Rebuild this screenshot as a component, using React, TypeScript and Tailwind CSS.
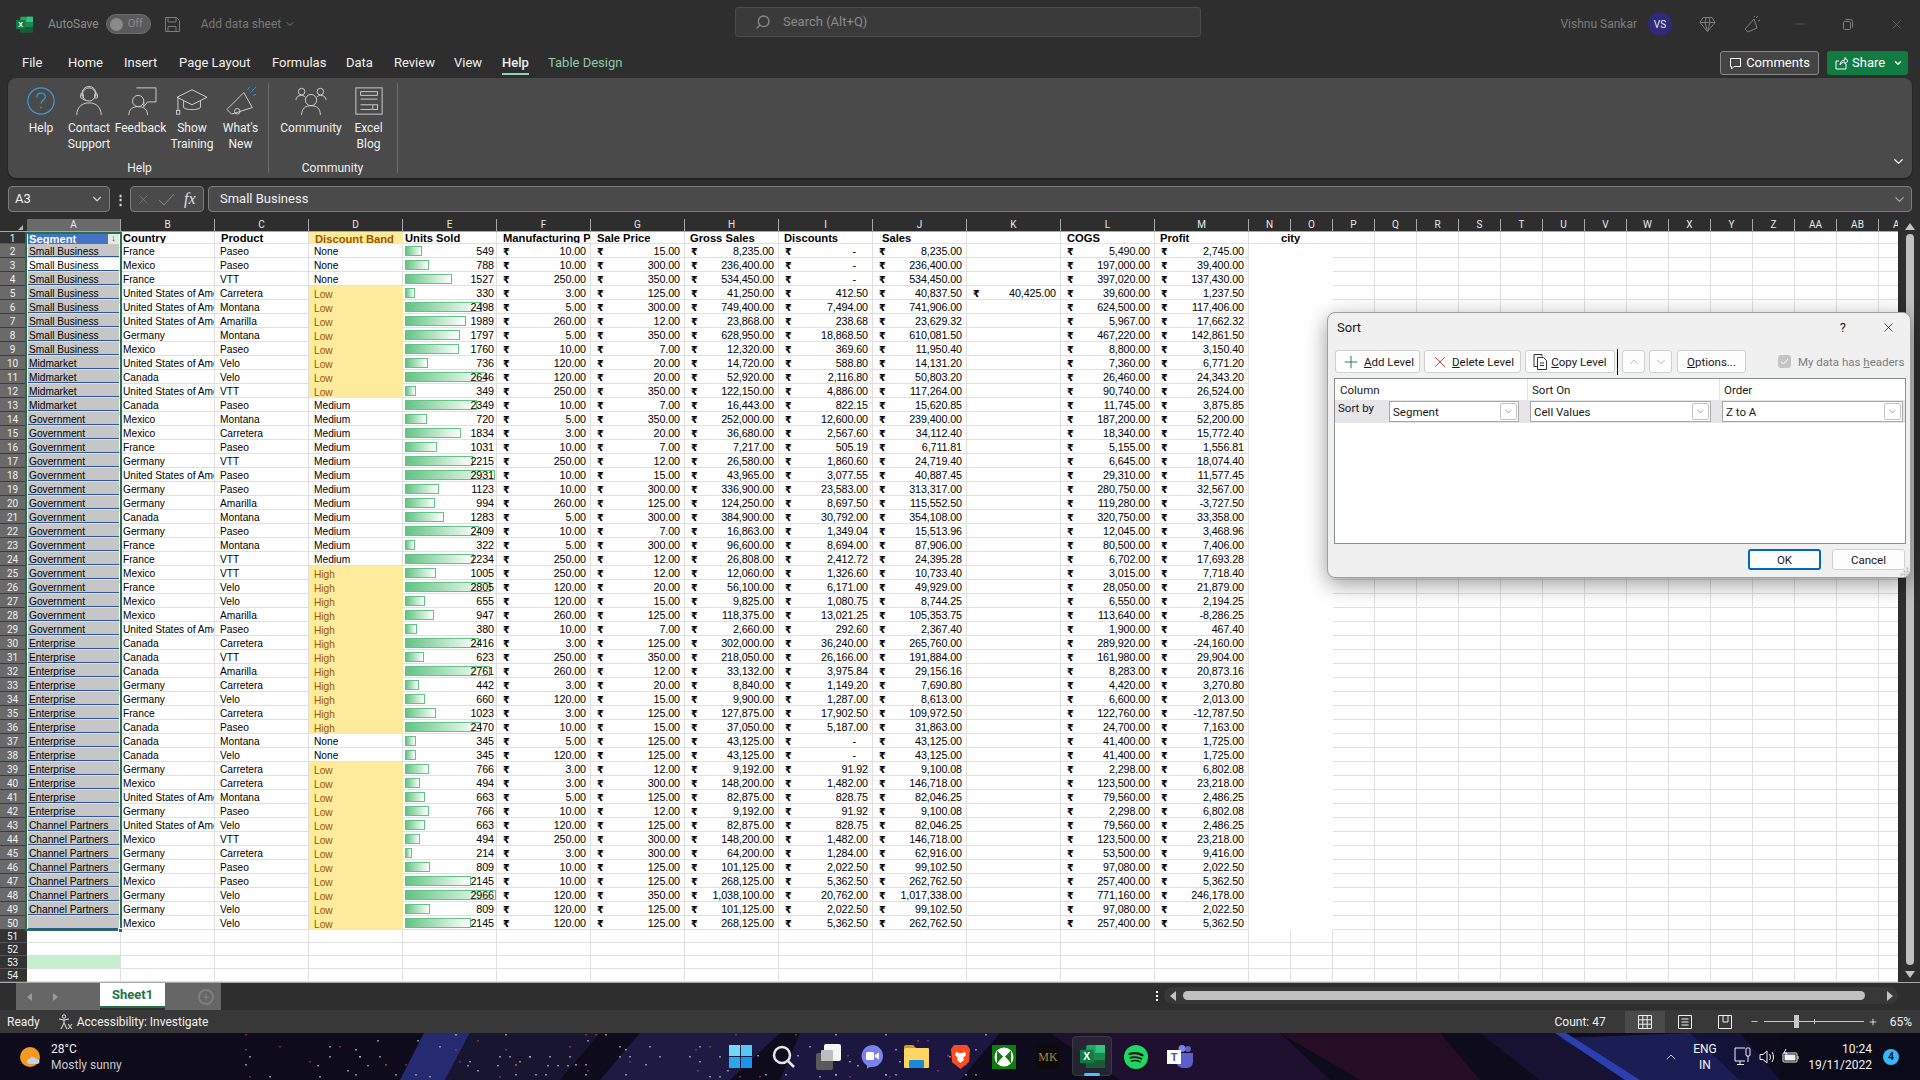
import { ChevronDown, ChevronUp, Minus, Plus, Search, X } from "lucide-react";
import type { ReactNode } from "react";

const RAW = `SB|France|Paseo|None|549|10.00|15.00|8,235.00|-|8,235.00|5,490.00|2,745.00
SB|Mexico|Paseo|None|788|10.00|300.00|236,400.00|-|236,400.00|197,000.00|39,400.00
SB|France|VTT|None|1527|250.00|350.00|534,450.00|-|534,450.00|397,020.00|137,430.00
SB|US|Carretera|Low|330|3.00|125.00|41,250.00|412.50|40,837.50|39,600.00|1,237.50
SB|US|Montana|Low|2498|5.00|300.00|749,400.00|7,494.00|741,906.00|624,500.00|117,406.00
SB|US|Amarilla|Low|1989|260.00|12.00|23,868.00|238.68|23,629.32|5,967.00|17,662.32
SB|Germany|Montana|Low|1797|5.00|350.00|628,950.00|18,868.50|610,081.50|467,220.00|142,861.50
SB|Mexico|Paseo|Low|1760|10.00|7.00|12,320.00|369.60|11,950.40|8,800.00|3,150.40
MM|US|Velo|Low|736|120.00|20.00|14,720.00|588.80|14,131.20|7,360.00|6,771.20
MM|Canada|Velo|Low|2646|120.00|20.00|52,920.00|2,116.80|50,803.20|26,460.00|24,343.20
MM|US|VTT|Low|349|250.00|350.00|122,150.00|4,886.00|117,264.00|90,740.00|26,524.00
MM|Canada|Paseo|Medium|2349|10.00|7.00|16,443.00|822.15|15,620.85|11,745.00|3,875.85
GV|Mexico|Montana|Medium|720|5.00|350.00|252,000.00|12,600.00|239,400.00|187,200.00|52,200.00
GV|Mexico|Carretera|Medium|1834|3.00|20.00|36,680.00|2,567.60|34,112.40|18,340.00|15,772.40
GV|France|Paseo|Medium|1031|10.00|7.00|7,217.00|505.19|6,711.81|5,155.00|1,556.81
GV|Germany|VTT|Medium|2215|250.00|12.00|26,580.00|1,860.60|24,719.40|6,645.00|18,074.40
GV|US|Paseo|Medium|2931|10.00|15.00|43,965.00|3,077.55|40,887.45|29,310.00|11,577.45
GV|Germany|Paseo|Medium|1123|10.00|300.00|336,900.00|23,583.00|313,317.00|280,750.00|32,567.00
GV|Germany|Amarilla|Medium|994|260.00|125.00|124,250.00|8,697.50|115,552.50|119,280.00|-3,727.50
GV|Canada|Montana|Medium|1283|5.00|300.00|384,900.00|30,792.00|354,108.00|320,750.00|33,358.00
GV|Germany|Paseo|Medium|2409|10.00|7.00|16,863.00|1,349.04|15,513.96|12,045.00|3,468.96
GV|France|Montana|Medium|322|5.00|300.00|96,600.00|8,694.00|87,906.00|80,500.00|7,406.00
GV|France|VTT|Medium|2234|250.00|12.00|26,808.00|2,412.72|24,395.28|6,702.00|17,693.28
GV|Mexico|VTT|High|1005|250.00|12.00|12,060.00|1,326.60|10,733.40|3,015.00|7,718.40
GV|France|Velo|High|2805|120.00|20.00|56,100.00|6,171.00|49,929.00|28,050.00|21,879.00
GV|Mexico|Velo|High|655|120.00|15.00|9,825.00|1,080.75|8,744.25|6,550.00|2,194.25
GV|Mexico|Amarilla|High|947|260.00|125.00|118,375.00|13,021.25|105,353.75|113,640.00|-8,286.25
GV|US|Paseo|High|380|10.00|7.00|2,660.00|292.60|2,367.40|1,900.00|467.40
EN|Canada|Carretera|High|2416|3.00|125.00|302,000.00|36,240.00|265,760.00|289,920.00|-24,160.00
EN|Canada|VTT|High|623|250.00|350.00|218,050.00|26,166.00|191,884.00|161,980.00|29,904.00
EN|Canada|Amarilla|High|2761|260.00|12.00|33,132.00|3,975.84|29,156.16|8,283.00|20,873.16
EN|Germany|Carretera|High|442|3.00|20.00|8,840.00|1,149.20|7,690.80|4,420.00|3,270.80
EN|Germany|Velo|High|660|120.00|15.00|9,900.00|1,287.00|8,613.00|6,600.00|2,013.00
EN|France|Carretera|High|1023|3.00|125.00|127,875.00|17,902.50|109,972.50|122,760.00|-12,787.50
EN|Canada|Paseo|High|2470|10.00|15.00|37,050.00|5,187.00|31,863.00|24,700.00|7,163.00
EN|Canada|Montana|None|345|5.00|125.00|43,125.00|-|43,125.00|41,400.00|1,725.00
EN|Canada|Velo|None|345|120.00|125.00|43,125.00|-|43,125.00|41,400.00|1,725.00
EN|Germany|Carretera|Low|766|3.00|12.00|9,192.00|91.92|9,100.08|2,298.00|6,802.08
EN|Mexico|Carretera|Low|494|3.00|300.00|148,200.00|1,482.00|146,718.00|123,500.00|23,218.00
EN|US|Montana|Low|663|5.00|125.00|82,875.00|828.75|82,046.25|79,560.00|2,486.25
EN|Germany|Paseo|Low|766|10.00|12.00|9,192.00|91.92|9,100.08|2,298.00|6,802.08
CP|US|Velo|Low|663|120.00|125.00|82,875.00|828.75|82,046.25|79,560.00|2,486.25
CP|Mexico|VTT|Low|494|250.00|300.00|148,200.00|1,482.00|146,718.00|123,500.00|23,218.00
CP|Germany|Carretera|Low|214|3.00|300.00|64,200.00|1,284.00|62,916.00|53,500.00|9,416.00
CP|Germany|Paseo|Low|809|10.00|125.00|101,125.00|2,022.50|99,102.50|97,080.00|2,022.50
CP|Mexico|Paseo|Low|2145|10.00|125.00|268,125.00|5,362.50|262,762.50|257,400.00|5,362.50
CP|Germany|Velo|Low|2966|120.00|350.00|1,038,100.00|20,762.00|1,017,338.00|771,160.00|246,178.00
CP|Germany|Velo|Low|809|120.00|125.00|101,125.00|2,022.50|99,102.50|97,080.00|2,022.50
|Mexico|Velo|Low|2145|120.00|125.00|268,125.00|5,362.50|262,762.50|257,400.00|5,362.50`;

const SEGMENTS: Record<string, string> = {
  SB: "Small Business",
  MM: "Midmarket",
  GV: "Government",
  EN: "Enterprise",
  CP: "Channel Partners",
  "": "",
};

const rows = RAW.split("\n").map((line) => line.split("|"));
const wideCols = ["A", "B", "C", "D", "E", "F", "G", "H", "I", "J", "K", "L", "M"];
const narrowCols = ["N", "O", "P", "Q", "R", "S", "T", "U", "V", "W", "X", "Y", "Z", "AA", "AB", "AC"];
const emptyCols = narrowCols.slice(2);
const LINE = "border-r border-b border-[#e0e0e0]";

function Money({ value, dash, extra }: { value: string; dash?: boolean; extra?: string }) {
  return (
    <div className={`w-[94px] h-full shrink-0 flex items-center justify-between pt-[2px] pl-[6px] pr-[4px] ${LINE} ${extra ?? ""}`}>
      <span className="font-['DejaVu_Sans',sans-serif] font-bold text-[9.5px]">₹</span>
      <span className={`text-[10.75px] tracking-[-0.1px] ${dash ? "pr-[12px]" : ""}`}>{value}</span>
    </div>
  );
}

function TextCell({ children, pad, className }: { children?: ReactNode; pad: string; className?: string }) {
  return (
    <div className={`w-[94px] h-full shrink-0 overflow-hidden whitespace-nowrap flex items-center pt-[2px] ${pad} ${className ?? LINE}`}>
      {children}
    </div>
  );
}

function HeaderCell({ children, pad, className }: { children?: ReactNode; pad: string; className?: string }) {
  return (
    <TextCell pad={pad} className={className}>
      <span className="font-bold text-[11.2px]">{children}</span>
    </TextCell>
  );
}

function RowNumber({ n, selected }: { n: number; selected: boolean }) {
  return (
    <div
      className={`w-[27px] h-full shrink-0 flex items-center justify-center pt-[1px] pr-[2px] text-[10px] text-[#f0f0f0] border-b font-['Roboto',sans-serif] ${
        selected ? "bg-[#6a6a6a] border-[#3c3c3c]" : "bg-[#333333] border-[#555555]"
      }`}
    >
      {n}
    </div>
  );
}

function DataRow({ r, n }: { r: string[]; n: number }) {
  const [seg, country, product, band, units, mfg, sale, gross, disc, sales, cogs, profit] = r;
  const hot = band === "Low" || band === "High";
  return (
    <div className="flex h-[14px]">
      <RowNumber n={n} selected />
      <div className="w-[94px] h-full shrink-0 pl-[1px] pr-[2px] border-b border-[#e0e0e0]">
        <div
          className={`h-full flex items-center pt-[2px] pl-[1px] border-b border-[#2f5597] whitespace-nowrap ${
            n === 3 ? "bg-white" : "bg-[#c6c6c6]"
          }`}
        >
          {SEGMENTS[seg]}
        </div>
      </div>
      <TextCell pad="pl-[2px]">{country === "US" ? "United States of America" : country}</TextCell>
      <TextCell pad="pl-[5px]">{product}</TextCell>
      <TextCell pad="pl-[5px]" className={hot ? "bg-[#ffeb9c] text-[#9c5700]" : LINE}>
        {band}
      </TextCell>
      <div className={`relative w-[94px] h-full shrink-0 flex items-center justify-end pt-[2px] pr-[2px] ${LINE}`}>
        <div
          className="absolute left-[2px] top-[2px] h-[10px] border border-[#63c384] bg-[linear-gradient(90deg,#63c384,#ffffff)]"
          style={{ width: (Number(units) / 2966) * 91 }}
        />
        <span className="relative text-[10.75px] tracking-[-0.1px]">{units}</span>
      </div>
      <Money value={mfg} />
      <Money value={sale} />
      <Money value={gross} />
      <Money value={disc} dash={disc === "-"} />
      <Money value={sales} />
      {n === 5 ? <Money value="40,425.00" /> : <div className={`w-[94px] h-full shrink-0 ${LINE}`} />}
      <Money value={cogs} />
      <Money value={profit} />
      <div className="w-[84px] h-full shrink-0" />
      {emptyCols.map((c) => (
        <div key={c} className={`w-[42px] h-full shrink-0 ${LINE}`} />
      ))}
    </div>
  );
}

function EmptyRow({ n, tint }: { n: number; tint?: boolean }) {
  return (
    <div className="flex h-[13px]">
      <RowNumber n={n} selected={false} />
      {wideCols.map((c, i) => (
        <div key={c} className={`w-[94px] h-full shrink-0 ${LINE} ${tint && i === 0 ? "bg-[#c6efce]" : ""}`} />
      ))}
      {narrowCols.map((c) => (
        <div key={c} className={`w-[42px] h-full shrink-0 ${LINE}`} />
      ))}
    </div>
  );
}

function ColumnHeaders() {
  return (
    <div className="flex h-[12px] bg-[#2e2e2e] text-[#e8e8e8] text-[10px] leading-[12px]">
      <div className="w-[27px] shrink-0 flex justify-end items-end pr-[4px] pb-[1px]">
        <div className="w-0 h-0 border-l-[5px] border-l-transparent border-b-[5px] border-b-[#b5b5b5]" />
      </div>
      {wideCols.map((c) => (
        <div
          key={c}
          className={`w-[94px] shrink-0 text-center border-r border-[#a8a8a8] ${c === "A" ? "bg-[#6a6a6a]" : ""}`}
        >
          {c}
        </div>
      ))}
      {narrowCols.map((c) => (
        <div key={c} className="w-[42px] shrink-0 text-center border-r border-[#a8a8a8]">
          {c}
        </div>
      ))}
    </div>
  );
}

function Grid() {
  return (
    <div className="relative bg-white text-black text-[10.2px] leading-[13px] font-['Liberation_Sans',Arial,sans-serif] border-t border-[#a8a8a8]">
      <div className="flex h-[12px]">
        <RowNumber n={1} selected={false} />
        <div className="w-[94px] h-full shrink-0 pl-[1px] pr-[2px]">
          <div className="h-full flex items-center justify-between pl-[1px] bg-[#4472c4] text-white font-bold text-[11.2px]">
            <span className="pt-[2px]">Segment</span>
            <span className="w-[11px] h-full bg-[#e8e8e8] text-[#333] text-[9px] leading-[12px] text-center font-normal">↓</span>
          </div>
        </div>
        <HeaderCell pad="pl-[2px]">Country</HeaderCell>
        <HeaderCell pad="pl-[6px]">Product</HeaderCell>
        <HeaderCell pad="pl-[6px]" className="bg-[#ffeb9c] text-[#9c5700]">
          Discount Band
        </HeaderCell>
        <HeaderCell pad="pl-[2px]">Units Sold</HeaderCell>
        <HeaderCell pad="pl-[6px]">Manufacturing Price</HeaderCell>
        <HeaderCell pad="pl-[6px]">Sale Price</HeaderCell>
        <HeaderCell pad="pl-[5px]">Gross Sales</HeaderCell>
        <HeaderCell pad="pl-[5px]">Discounts</HeaderCell>
        <HeaderCell pad="pl-[9px]">Sales</HeaderCell>
        <HeaderCell pad="pl-[0px]" />
        <HeaderCell pad="pl-[6px]">COGS</HeaderCell>
        <HeaderCell pad="pl-[5px]">Profit</HeaderCell>
        <div className="w-[84px] h-full shrink-0 flex items-center pt-[2px] pl-[32px] font-bold text-[11.2px] border-b border-[#e0e0e0]">city</div>
        {emptyCols.map((c) => (
          <div key={c} className={`w-[42px] h-full shrink-0 ${LINE}`} />
        ))}
      </div>
      {rows.map((r, i) => (
        <DataRow key={i} r={r} n={i + 2} />
      ))}
      <EmptyRow n={51} />
      <EmptyRow n={52} />
      <EmptyRow n={53} tint />
      <EmptyRow n={54} />
      {/* selected range outline */}
      <div className="absolute left-[25px] top-0 w-[97px] h-[699px] border-2 border-[#217346] pointer-events-none" />
      <div className="absolute left-[118px] top-[696px] w-[5px] h-[5px] bg-[#217346] border border-white" />
    </div>
  );
}

function RibbonIcon({ children }: { children: ReactNode }) {
  return (
    <svg width="32" height="30" viewBox="0 0 34 32" fill="none" stroke="#d2d2d2" strokeWidth="1" className="shrink-0">
      {children}
    </svg>
  );
}

const ribbonButtons = [
  {
    w: "w-[46px]",
    lines: ["Help"],
    icon: (
      <>
        <ellipse cx="17" cy="16" rx="14" ry="14" stroke="#3f97d8" strokeWidth="1.3" />
        <path d="M12.5 12c0-3 2-4.5 4.5-4.500s4.500 1.700 4.500 4.200c0 3.600-4.500 3.600-4.500 7.300" stroke="#3f97d8" strokeWidth="1.3" />
        <circle cx="17" cy="23" r="1" fill="#3f97d8" stroke="none" />
      </>
    ),
  },
  {
    w: "w-[50px]",
    lines: ["Contact", "Support"],
    icon: (
      <>
        <circle cx="17" cy="9" r="7" />
        <path d="M9.500 11V8a7.500 7.500 0 0 1 15 0v3" />
        <rect x="8" y="8" width="3" height="5" rx="1" />
        <rect x="23" y="8" width="3" height="5" rx="1" />
        <path d="M10 14l4 1.500" />
        <path d="M4 31c0-8 5-13 13-13s13 5 13 13" />
      </>
    ),
  },
  {
    w: "w-[53px]",
    lines: ["Feedback"],
    icon: (
      <>
        <path d="M12 2h21v15h-9l-4 5v-5" />
        <circle cx="14" cy="16" r="6" />
        <path d="M4 31c0-6 4-9 10-9s10 3 10 9" />
      </>
    ),
  },
  {
    w: "w-[50px]",
    lines: ["Show", "Training"],
    icon: (
      <>
        <path d="M1 12L17 4l16 8-16 8z" />
        <path d="M8 16v7c3 3 15 3 18 0v-7" />
        <path d="M2 12v14" />
        <rect x="0.500" y="26" width="3.500" height="4" />
      </>
    ),
  },
  {
    w: "w-[47px]",
    lines: ["What's", "New"],
    icon: (
      <>
        <path d="M20 7L2 25l5 5 22-7z" />
        <circle cx="13" cy="27" r="3" />
        <path d="M27 7l6-6M24 4l2-3M30 10l3-1" stroke="#3f97d8" />
      </>
    ),
  },
];

function RibbonLabel({ lines }: { lines: string[] }) {
  return (
    <div className="mt-[4px] text-center leading-[16px] text-[12px] text-[#f0f0f0] whitespace-nowrap">
      {lines.map((l) => (
        <div key={l}>{l}</div>
      ))}
    </div>
  );
}

function Ribbon() {
  return (
    <div className="relative mx-[8px] h-[100px] rounded-[8px] bg-[#4a4a4a] flex shadow-[0_1px_2px_rgba(0,0,0,0.5)]">
      <div className="w-[261px] pl-[10px] my-[5px] border-r border-[#6c6c6c] flex flex-col">
        <div className="flex flex-1 pt-[3px]">
          {ribbonButtons.map((b) => (
            <div key={b.lines[0]} className={`${b.w} flex flex-col items-center`}>
              <RibbonIcon>{b.icon}</RibbonIcon>
              <RibbonLabel lines={b.lines} />
            </div>
          ))}
        </div>
        <div className="text-center text-[12px] leading-[16px] text-[#f0f0f0] pr-[7px] -mb-[3px]">Help</div>
      </div>
      <div className="w-[129px] pl-[13px] my-[5px] border-r border-[#6c6c6c] flex flex-col">
        <div className="flex flex-1 pt-[3px]">
          <div className="w-[58px] flex flex-col items-center">
            <RibbonIcon>
              <circle cx="17" cy="15" r="6" />
              <path d="M7 31c0-7 4-10 10-10s10 3 10 10" />
              <circle cx="7" cy="6" r="3.500" />
              <circle cx="27" cy="6" r="3.500" />
              <path d="M1 15c0-3 2-5 6-5 2 0 3 1 4 2M33 15c0-3-2-5-6-5-2 0-3 1-4 2" />
            </RibbonIcon>
            <RibbonLabel lines={["Community"]} />
          </div>
          <div className="w-[57px] flex flex-col items-center">
            <RibbonIcon>
              <rect x="3" y="2" width="28" height="28" />
              <path d="M8 6h18v4H8zM8 14h18M8 20h12M8 25h12" />
              <rect x="21" y="20" width="5" height="5" />
            </RibbonIcon>
            <RibbonLabel lines={["Excel", "Blog"]} />
          </div>
        </div>
        <div className="text-center text-[12px] leading-[16px] text-[#f0f0f0] pr-[14px] -mb-[3px]">Community</div>
      </div>
      <ChevronDown size={15} className="absolute right-[6px] bottom-[9px] text-white" />
    </div>
  );
}

function ExcelLogo({ size }: { size: number }) {
  return (
    <svg width={size} height={size} viewBox="0 0 24 24" className="shrink-0">
      <rect x="6" y="1" width="18" height="22" rx="1.500" fill="#21a366" />
      <rect x="15" y="1" width="9" height="7.500" fill="#33c481" />
      <rect x="6" y="8.500" width="18" height="7" fill="#107c41" opacity="0.6" />
      <rect x="6" y="15.500" width="18" height="7.500" fill="#185c37" />
      <rect x="0" y="5.500" width="13" height="13" rx="1" fill="#107c41" />
      <text x="6.500" y="15.500" textAnchor="middle" fontSize="10" fontWeight="700" fill="#fff" fontFamily="Liberation Sans">
        X
      </text>
    </svg>
  );
}

function TitleBar() {
  return (
    <div className="h-[44px] flex items-center text-[12px] pt-[4px]">
      <div className="w-[735px] flex items-center whitespace-nowrap">
        <div className="ml-[16px]">
          <ExcelLogo size={17} />
        </div>
        <span className="ml-[15px] text-[#8c8c8c]">AutoSave</span>
        <div className="ml-[7px] w-[45px] h-[20px] rounded-full bg-[#5a5a5a] border border-[#6e6e6e] flex items-center pl-[3px] gap-[5px] text-[11px] text-[#8c8c8c]">
          <div className="w-[13px] h-[13px] rounded-full bg-[#8a8a8a]" />
          Off
        </div>
        <svg width="17" height="17" viewBox="0 0 17 17" fill="none" stroke="#7d7d7d" className="ml-[13px]">
          <path d="M1.500 1.500h11l3 3v11h-14z" />
          <path d="M4 1.500v4.500h8V1.500M4 15.500v-5h8v5" />
        </svg>
        <span className="ml-[20px] text-[#787878]">Add data sheet</span>
        <ChevronDown size={12} className="ml-[3px] text-[#787878]" />
      </div>
      <div className="w-[466px] h-[30px] bg-[#3a3a3a] border border-[#4c4c4c] rounded-[3px] flex items-center pl-[19px] text-[#8a8a8a] -mt-[4px]">
        <Search size={16} className="-scale-x-100" />
        <span className="ml-[12px] text-[13px]">Search (Alt+Q)</span>
      </div>
      <div className="ml-auto flex items-center">
        <span className="text-[#7d7d7d] whitespace-nowrap">Vishnu Sankar</span>
        <div className="ml-[11px] w-[24px] h-[24px] rounded-full bg-[#2f2b78] text-[#e6e6e6] text-[10px] flex items-center justify-center">
          VS
        </div>
        <div className="ml-[12px] w-[46px] flex justify-center">
          <svg width="17" height="17" viewBox="0 0 17 17" fill="none" stroke="#7d7d7d">
            <path d="M4 1.500h9l3 5-7.500 9-7.500-9zM1 6.500h15M6 6.500l2.500 9 2.500-9M6 6.500l1-5M11 6.500l-1-5" />
          </svg>
        </div>
        <div className="w-[44px] flex justify-center">
          <svg width="17" height="18" viewBox="0 0 17 18" fill="none" stroke="#7d7d7d">
            <path d="M10 4L1 14l3 3 9-4zM12 3l2-2M14 6l2-1M10 2l1-1" />
          </svg>
        </div>
        <div className="ml-[2px] w-[48px] flex justify-center">
          <Minus size={14} className="text-[#6e6e6e]" strokeWidth={1} />
        </div>
        <div className="w-[48px] flex justify-center">
          <svg width="10" height="11" viewBox="0 0 10 11" fill="none" stroke="#7d7d7d">
            <rect x="0.500" y="2.500" width="7" height="8" rx="1" />
            <path d="M2.500 0.500h5a2 2 0 0 1 2 2v6" />
          </svg>
        </div>
        <div className="w-[48px] flex justify-center">
          <X size={15} className="text-[#7d7d7d]" strokeWidth={1} />
        </div>
      </div>
    </div>
  );
}

const tabs = [
  { t: "File", w: "w-[46px]" },
  { t: "Home", w: "w-[56px]" },
  { t: "Insert", w: "w-[55px]" },
  { t: "Page Layout", w: "w-[93px]" },
  { t: "Formulas", w: "w-[74px]" },
  { t: "Data", w: "w-[48px]" },
  { t: "Review", w: "w-[60px]" },
  { t: "View", w: "w-[48px]" },
];

function Tabs() {
  return (
    <div className="h-[34px] flex items-start pt-[9px] pl-[22px] pr-[12px] text-[13px] leading-[20px] text-[#f0f0f0]">
      <div className="flex">
        {tabs.map(({ t, w }) => (
          <span key={t} className={`${w} whitespace-nowrap`}>
            {t}
          </span>
        ))}
        <span className="w-[46px]">
          <span className="relative inline-block font-medium">
            Help
            <span className="absolute left-0 right-0 top-[20px] h-[2px] bg-[#8fd3b6]" />
          </span>
        </span>
        <span className="text-[#8ec9a8] whitespace-nowrap">Table Design</span>
      </div>
      <div className="ml-auto flex gap-[8px] -mt-[2px]">
        <div className="w-[99px] h-[24px] rounded-[3px] border border-[#8a8a8a] bg-[#444444] flex items-center justify-center gap-[4px] text-white">
          <svg width="13" height="13" viewBox="0 0 13 13" fill="none" stroke="#fff">
            <path d="M1.500 1.500h10v8H5l-2.500 2.500v-2.500h-1z" />
          </svg>
          Comments
        </div>
        <div className="w-[81px] h-[24px] rounded-[3px] bg-[#107c41] flex items-center pl-[8px] text-white">
          <svg width="13" height="14" viewBox="0 0 13 14" fill="none" stroke="#fff" className="mr-[4px]">
            <path d="M11 8v5H1V5h3M5 9c0-3 2-5 5-5V1.500l3 3.500-3 3V6c-2 0-4 1-5 3z" />
          </svg>
          Share
          <ChevronDown size={10} className="ml-auto mr-[5px]" strokeWidth={3} />
        </div>
      </div>
    </div>
  );
}

function FormulaBar() {
  return (
    <div className="mt-[8px] mx-[8px] h-[26px] flex text-[13px] text-[#f0f0f0]">
      <div className="w-[102px] bg-[#4a4a4a] border border-[#7c7c7c] rounded-[4px] flex items-center pl-[6px] pr-[5px] justify-between">
        A3
        <ChevronDown size={14} className="text-[#d0d0d0]" />
      </div>
      <div className="w-[20px] flex items-center justify-center font-bold text-[#d8d8d8] leading-none">⋮</div>
      <div className="w-[74px] bg-[#4a4a4a] border border-[#7c7c7c] rounded-[4px] flex items-center pl-[5px] gap-[7px] text-[#8a8a8a]">
        <X size={15} strokeWidth={1} />
        <svg width="17" height="15" viewBox="0 0 17 15" fill="none" stroke="#8a8a8a">
          <path d="M1 8l5 5L16 2" />
        </svg>
        <span className="ml-[2px] font-['Liberation_Serif',serif] italic text-[16px] text-[#e0e0e0]">fx</span>
      </div>
      <div className="ml-[4px] flex-1 bg-[#4a4a4a] border border-[#7c7c7c] rounded-[4px] flex items-center pl-[11px] pr-[4px] justify-between">
        Small Business
        <ChevronDown size={15} className="text-[#a8a8a8]" />
      </div>
    </div>
  );
}

function VerticalScrollbar() {
  return (
    <div className="w-[22px] flex flex-col items-center bg-[#2e2e2e] pl-[2px]">
      <div className="mt-[4px] w-0 h-0 border-l-[5px] border-r-[5px] border-b-[7px] border-transparent border-b-[#c4c4c4]" />
      <div className="mt-[4px] w-[8px] h-[731px] rounded-full bg-[#c0c0c0]" />
      <div className="mt-[6px] w-0 h-0 border-l-[5px] border-r-[5px] border-t-[7px] border-transparent border-t-[#c4c4c4]" />
    </div>
  );
}

function SheetBar() {
  return (
    <div className="h-[28px] flex bg-[#2e2e2e] border-t border-[#a8a8a8] items-start">
      <div className="ml-[16px] w-[84px] h-[27px] bg-[#666666] flex items-center pl-[11px] gap-[21px]">
        <div className="w-0 h-0 border-t-[4px] border-b-[4px] border-r-[5px] border-transparent border-r-[#9a9a9a]" />
        <div className="w-0 h-0 border-t-[4px] border-b-[4px] border-l-[5px] border-transparent border-l-[#9a9a9a]" />
      </div>
      <div className="w-[65px] h-[25px] bg-white border-b-[2px] border-[#217346] text-[#217346] font-bold text-[13px] flex items-center justify-center">
        Sheet1
      </div>
      <div className="w-[56px] h-[27px] bg-[#666666] flex items-center pl-[33px]">
        <div className="w-[16px] h-[16px] rounded-full border-2 border-[#7f7f7f] flex items-center justify-center">
          <Plus size={10} strokeWidth={3} className="text-[#7f7f7f]" />
        </div>
      </div>
      <div className="ml-[929px] w-[14px] h-full flex flex-col items-center justify-center gap-[2px] pb-[2px]">
        <div className="w-[2px] h-[2px] bg-white" />
        <div className="w-[2px] h-[2px] bg-white" />
        <div className="w-[2px] h-[2px] bg-white" />
      </div>
      <div className="mt-[4px] w-[734px] h-[17px] rounded-full bg-[#383838] flex items-center pl-[6px] pr-[5px]">
        <div className="w-0 h-0 border-t-[5px] border-b-[5px] border-r-[6px] border-transparent border-r-[#c4c4c4]" />
        <div className="ml-[7px] w-[682px] h-[9px] rounded-full bg-[#c0c0c0]" />
        <div className="ml-auto w-0 h-0 border-t-[5px] border-b-[5px] border-l-[6px] border-transparent border-l-[#c4c4c4]" />
      </div>
    </div>
  );
}

function StatusBar() {
  return (
    <div className="h-[23px] bg-[#383838] flex items-center text-[12px] text-[#f0f0f0] whitespace-nowrap pr-[8px]">
      <span className="ml-[7px]">Ready</span>
      <svg width="15" height="16" viewBox="0 0 15 16" fill="none" stroke="#e8e8e8" className="ml-[18px]">
        <circle cx="6" cy="2.500" r="1.700" />
        <path d="M1 5l5 1 5-1M6 6v3l-3 6M6 9l3 6M10 10l4 5M14 10l-4 5" />
      </svg>
      <span className="ml-[4px]">Accessibility: Investigate</span>
      <span className="ml-auto">Count: 47</span>
      <div className="ml-[19px] w-[40px] h-[22px] bg-[#4a4a4a] flex items-center justify-center">
        <svg width="14" height="14" viewBox="0 0 14 14" fill="none" stroke="#f0f0f0">
          <path d="M0.500 0.500h13v13h-13zM0.500 4.800h13M0.500 9.200h13M4.800 0.500v13M9.200 0.500v13" />
        </svg>
      </div>
      <div className="w-[40px] flex justify-center">
        <svg width="14" height="14" viewBox="0 0 14 14" fill="none" stroke="#f0f0f0">
          <path d="M0.500 0.500h13v13h-13zM3.500 4h7M3.500 7h7M3.500 10h7" />
        </svg>
      </div>
      <div className="w-[40px] flex justify-center">
        <svg width="14" height="14" viewBox="0 0 14 14" fill="none" stroke="#f0f0f0">
          <path d="M0.500 0.500h13v13h-13zM5 0.500v6.500h5v-6.500" />
        </svg>
      </div>
      <Minus size={9} className="ml-[5px]" />
      <div className="relative ml-[5px] w-[100px] h-px bg-[#c8c8c8]">
        <div className="absolute left-[30px] -top-[6px] w-[5px] h-[13px] bg-[#c8c8c8]" />
        <div className="absolute left-[50px] -top-[2px] w-px h-[5px] bg-[#c8c8c8]" />
      </div>
      <Plus size={10} className="ml-[4px]" />
      <span className="ml-[12px]">65%</span>
    </div>
  );
}

function SelectBox({ w, label }: { w: string; label: string }) {
  return (
    <div className={`${w} h-[21px] bg-white border border-[#a8a8a8] flex items-center justify-between pl-[3px] pr-[1px]`}>
      {label}
      <div className="w-[17px] h-[17px] border border-[#c4c4c4] rounded-[2px] flex items-center justify-center">
        <ChevronDown size={11} className="text-[#555555]" strokeWidth={1.2} />
      </div>
    </div>
  );
}

function DialogButton({ w, children }: { w: string; children: ReactNode }) {
  return (
    <div className={`${w} h-[23px] shrink-0 bg-[#fdfdfd] border border-[#d0d0d0] rounded-[3px] flex items-center justify-center gap-[3px] whitespace-nowrap`}>
      {children}
    </div>
  );
}

function SortDialog() {
  return (
    <div className="absolute left-[1327px] top-[312px] w-[584px] h-[266px] bg-[#f0f0f0] rounded-[8px] border border-[#a0a0a0] shadow-[0_6px_22px_rgba(0,0,0,0.4)] text-[11.5px] leading-[16px] text-[#1a1a1a]">
      <div className="h-[37px] flex items-start pt-[7px] pl-[9px] pr-[14px] text-[13px]">
        Sort
        <span className="ml-auto">?</span>
        <X size={15} strokeWidth={1.2} className="ml-[35px]" />
      </div>
      <div className="h-[23px] flex items-center pl-[7px]">
        <DialogButton w="w-[85px]">
          <Plus size={20} strokeWidth={1.1} className="text-[#0e7a3e]" />
          <span>
            <u>A</u>dd Level
          </span>
        </DialogButton>
        <div className="w-[4px]" />
        <DialogButton w="w-[97px]">
          <X size={18} strokeWidth={1.3} className="text-[#d9362b]" />
          <span>
            <u>D</u>elete Level
          </span>
        </DialogButton>
        <div className="w-[4px]" />
        <DialogButton w="w-[90px]">
          <svg width="15" height="16" viewBox="0 0 15 16" fill="none" stroke="#333333">
            <path d="M9 2.500V0.500H1v12h3M4.500 3.500h6l3 3v9h-9zM7 9h4M7 11.500h4" />
          </svg>
          <span>
            <u>C</u>opy Level
          </span>
        </DialogButton>
        <div className="ml-[2px] mr-[4px] w-px h-[26px] shrink-0 bg-black" />
        <DialogButton w="w-[23px]">
          <ChevronUp size={14} strokeWidth={1} className="text-[#8a8a8a]" />
        </DialogButton>
        <div className="w-[4px]" />
        <DialogButton w="w-[23px]">
          <ChevronDown size={14} strokeWidth={1} className="text-[#8a8a8a]" />
        </DialogButton>
        <div className="w-[5px]" />
        <DialogButton w="w-[69px]">
          <span>
            <u>O</u>ptions...
          </span>
        </DialogButton>
        <div className="ml-[32px] w-[13px] h-[13px] rounded-[3px] bg-[#c4c4c4] flex items-center justify-center">
          <svg width="9" height="9" viewBox="0 0 9 9" fill="none" stroke="#fff">
            <path d="M1 4.500l2.500 2.500L8 2" />
          </svg>
        </div>
        <span className="ml-[7px] text-[#7c7c7c] whitespace-nowrap">
          My data has <u>h</u>eaders
        </span>
      </div>
      <div className="mt-[5px] ml-[6px] w-[572px] h-[166px] bg-white border border-[#8a8f96]">
        <div className="h-[21px] flex items-center">
          <div className="w-[193px] h-full flex items-center pl-[5px] border-r border-[#e4e4e4]">Column</div>
          <div className="w-[192px] h-full flex items-center pl-[4px] border-r border-[#e4e4e4]">Sort On</div>
          <div className="flex-1 h-full flex items-center pl-[4px]">Order</div>
        </div>
        <div className="h-[23px] bg-[#e6e6ea] flex items-center pl-[1px]">
          <span className="w-[53px] h-full pl-[2px]">Sort by</span>
          <SelectBox w="w-[130px]" label="Segment" />
          <div className="w-[11px]" />
          <SelectBox w="w-[181px]" label="Cell Values" />
          <div className="w-[11px]" />
          <SelectBox w="w-[181px]" label="Z to A" />
        </div>
      </div>
      <div className="mt-[5px] flex pl-[420px] gap-[11px]">
        <div className="w-[73px] h-[21px] bg-[#fdfdfd] border-2 border-[#0067c0] rounded-[3px] flex items-center justify-center">OK</div>
        <div className="w-[73px] h-[21px] bg-[#fdfdfd] border border-[#d0d0d0] rounded-[3px] flex items-center justify-center">Cancel</div>
      </div>
      <svg width="9" height="9" viewBox="0 0 9 9" fill="#b8b8b8" className="absolute right-[1px] bottom-[1px]">
        <rect x="6.500" y="0.500" width="2" height="2" />
        <rect x="3.500" y="3.500" width="2" height="2" />
        <rect x="6.500" y="3.500" width="2" height="2" />
        <rect x="0.500" y="6.500" width="2" height="2" />
        <rect x="3.500" y="6.500" width="2" height="2" />
        <rect x="6.500" y="6.500" width="2" height="2" />
      </svg>
    </div>
  );
}

// pseudo random light specks of the wallpaper city
const specks = Array.from({ length: 130 }, (_, i) => ({
  x: 245 + ((i * i * 37 + i * 113) % 760),
  y: 1 + ((i * i * 11 + i * 29) % 45),
  red: i % 3 === 0,
}));

function Wallpaper() {
  return (
    <svg width="1920" height="47" viewBox="0 0 1920 47" className="absolute inset-0">
      <rect width="1920" height="47" fill="#0e0b1d" />
      <polygon points="424,0 470,0 445,47 400,47" fill="#262a70" />
      <polygon points="470,0 600,0 560,47 445,47" fill="#17152f" />
      <polygon points="640,0 780,0 730,47 600,47" fill="#1d1a44" />
      <polygon points="800,0 1000,0 960,47 780,47" fill="#1b1740" />
      <polygon points="1050,0 1280,0 1330,47 1120,47" fill="#1f1030" />
      <polygon points="1280,0 1440,0 1480,47 1360,47" fill="#260d26" />
      <polygon points="1480,0 1560,0 1640,47 1540,47" fill="#171232" />
      <polygon points="1560,5 1690,0 1740,47 1630,47" fill="#1a1e55" />
      <polygon points="1555,0 1566,0 1640,47 1625,47" fill="#2b3fb0" />
      <polygon points="1690,0 1740,0 1780,47 1740,47" fill="#131238" />
      <rect x="1780" width="140" height="47" fill="#0b0a18" />
      {specks.map((s, i) => (
        <rect key={i} x={s.x} y={s.y} width="2" height="1.500" fill={s.red ? "#b83a3a" : "#bfb8c8"} opacity="0.7" />
      ))}
    </svg>
  );
}

function TaskIcon({ children, active }: { children: ReactNode; active?: boolean }) {
  return (
    <div className="relative w-[44px] h-[47px] flex items-center justify-center">
      {active && <div className="absolute left-[2px] right-[2px] top-[3px] bottom-[4px] rounded-[4px] bg-[#2a2a36]/80 border border-[#3a3a46]" />}
      <div className="relative">{children}</div>
      {active && <div className="absolute left-[14px] w-[16px] top-[40px] h-[3px] rounded-full bg-[#4cc2ff]" />}
    </div>
  );
}

function Taskbar() {
  return (
    <div className="relative h-[47px] flex items-center text-[#f2f2f2] text-[12px] leading-[16px]">
      <Wallpaper />
      <div className="relative flex items-center ml-[20px] w-[698px]">
        <svg width="24" height="22" viewBox="0 0 24 22">
          <circle cx="10" cy="11" r="10" fill="#f39a1f" />
          <path d="M10 18c-2 0-3-1-3-2.500S8 13 9.500 13c.5-2 4-3 5.500-1 .5.500 1 1 1 1 2 0 3.500 1 3.500 2.500S18.500 18 17 18z" fill="#b9d7f0" />
        </svg>
        <div className="ml-[7px]">
          <div>28°C</div>
          <div className="text-[#c9c9c9]">Mostly sunny</div>
        </div>
      </div>
      <div className="relative flex">
        <TaskIcon>
          <div className="grid grid-cols-2 gap-[1px] w-[23px] h-[23px]">
            <div className="bg-[#6fd8fb]" />
            <div className="bg-[#55c8f8]" />
            <div className="bg-[#29a8f0]" />
            <div className="bg-[#1b94ea]" />
          </div>
        </TaskIcon>
        <TaskIcon>
          <svg width="24" height="24" viewBox="0 0 24 24" fill="none">
            <circle cx="10" cy="10" r="8" stroke="#e6e6e6" strokeWidth="2.500" />
            <path d="M16 16l6 6" stroke="#e6e6e6" strokeWidth="2.500" />
          </svg>
        </TaskIcon>
        <TaskIcon>
          <svg width="25" height="26" viewBox="0 0 25 26">
            <rect x="0" y="9" width="17" height="17" rx="2" fill="#5a5a5a" />
            <rect x="8" y="0" width="17" height="17" rx="2" fill="#f4f4f4" />
            <rect x="5" y="6" width="12" height="11" rx="1" fill="#bdbdbd" />
          </svg>
        </TaskIcon>
        <TaskIcon>
          <svg width="24" height="26" viewBox="0 0 24 26">
            <path d="M12 1a11 11 0 0 1 0 22c-2 0-3 0-5 2v-3.500A11 11 0 0 1 12 1z" fill="#7b83eb" />
            <rect x="6" y="8" width="8" height="8" rx="1.500" fill="#fff" />
            <path d="M15 11l4-2.500v7L15 13z" fill="#fff" />
          </svg>
        </TaskIcon>
        <TaskIcon>
          <svg width="25" height="26" viewBox="0 0 25 26">
            <path d="M0 3a2 2 0 0 1 2-2h7l3 3h-12z" fill="#d49a11" />
            <rect x="0" y="4" width="25" height="20" rx="1" fill="#fcd562" />
            <rect x="5" y="16" width="15" height="8" rx="1" fill="#1a87d8" />
          </svg>
        </TaskIcon>
        <TaskIcon>
          <svg width="21" height="26" viewBox="0 0 21 26">
            <path d="M4 1h13l3 4-1 13-8.500 7L2 18 1 5z" fill="#fb4c1f" />
            <path d="M6 8l3 1h3l3-1 1 3-3 3 1 2-3.500 3L7 16l1-2-3-3z" fill="#fff" />
          </svg>
        </TaskIcon>
        <TaskIcon>
          <div className="w-[24px] h-[24px] bg-[#107c10] flex items-center justify-center">
            <svg width="20" height="20" viewBox="0 0 20 20">
              <circle cx="10" cy="10" r="9.500" fill="#fff" />
              <path d="M3 3.500l7 7 7-7v13l-7-6-7 6z" fill="#107c10" />
              <path d="M10 8.500L4 15h12z" fill="#fff" />
            </svg>
          </div>
        </TaskIcon>
        <TaskIcon>
          <div className="w-[24px] h-[24px] bg-[#0c0a0a] flex items-center justify-center font-['Liberation_Serif',serif] text-[#a58a45] text-[12px]">
            MK
          </div>
        </TaskIcon>
        <TaskIcon active>
          <ExcelLogo size={25} />
        </TaskIcon>
        <TaskIcon>
          <svg width="24" height="24" viewBox="0 0 24 24" fill="none" stroke="#111" strokeLinecap="round">
            <circle cx="12" cy="12" r="12" fill="#1ed760" stroke="none" />
            <path d="M5.500 9c4-1.200 9-1 13 1.200" strokeWidth="2.200" />
            <path d="M6.500 12.700c3.500-1 7.500-.8 10.800 1" strokeWidth="1.800" />
            <path d="M7.500 16c3-.7 6-.6 8.700.9" strokeWidth="1.500" />
          </svg>
        </TaskIcon>
        <TaskIcon>
          <svg width="26" height="24" viewBox="0 0 26 24">
            <circle cx="21" cy="4" r="3" fill="#5b5fc7" />
            <circle cx="15" cy="3.500" r="3.500" fill="#7b83eb" />
            <path d="M9 8h17v9a6 6 0 0 1-6 6h-4a7 7 0 0 1-7-7z" fill="#5b5fc7" />
            <rect x="0" y="5" width="14" height="14" fill="#fff" />
            <text x="7" y="16" textAnchor="middle" fontSize="11" fontWeight="700" fill="#4b53bc" fontFamily="Liberation Sans">
              T
            </text>
          </svg>
        </TaskIcon>
      </div>
      <div className="relative ml-auto flex items-center h-full pr-[21px]">
        <ChevronUp size={16} strokeWidth={1.2} />
        <div className="ml-[13px] w-[26px] text-center whitespace-nowrap leading-[16px] text-[12px]">
          <div>ENG</div>
          <div>IN</div>
        </div>
        <svg width="17" height="20" viewBox="0 0 17 20" fill="none" stroke="#f2f2f2" className="ml-[16px]">
          <path d="M11 1H1v13h10M6 14v3M3 17.500h7" />
          <rect x="12" y="1" width="4" height="8" rx="1" />
          <path d="M14 9v6" />
        </svg>
        <svg width="17" height="16" viewBox="0 0 17 16" fill="none" stroke="#f2f2f2" className="ml-[8px]">
          <path d="M1 5.500h3L8 2v12l-4-3.500H1zM10.500 5c1.200 1.800 1.200 4.200 0 6M13 3c2 3 2 7 0 10" />
        </svg>
        <svg width="18" height="16" viewBox="0 0 18 16" fill="none" stroke="#f2f2f2" className="ml-[6px]">
          <rect x="1" y="4" width="14" height="9" rx="1" />
          <rect x="3" y="6" width="10" height="5" fill="#f2f2f2" />
          <path d="M16 7v3" />
          <path d="M4 0L2 4h3L3 7" />
        </svg>
        <div className="w-[72px] text-right whitespace-nowrap leading-[16px]">
          <div>10:24</div>
          <div>19/11/2022</div>
        </div>
        <div className="ml-[11px] w-[16px] h-[16px] rounded-full bg-[#38b6f5] text-[#0a0a0a] text-[10px] flex items-center justify-center font-semibold">
          4
        </div>
      </div>
    </div>
  );
}

export default function App() {
  return (
    <div className="relative w-[1920px] h-[1080px] overflow-hidden flex flex-col bg-[#2e2e2e] font-['Roboto',sans-serif]">
      <TitleBar />
      <Tabs />
      <Ribbon />
      <FormulaBar />
      <div className="mt-[7px] h-[763px] flex overflow-hidden">
        <div className="w-[1898px] overflow-hidden">
          <div className="w-[1925px]">
            <ColumnHeaders />
            <Grid />
          </div>
        </div>
        <VerticalScrollbar />
      </div>
      <SheetBar />
      <StatusBar />
      <Taskbar />
      <SortDialog />
    </div>
  );
}
